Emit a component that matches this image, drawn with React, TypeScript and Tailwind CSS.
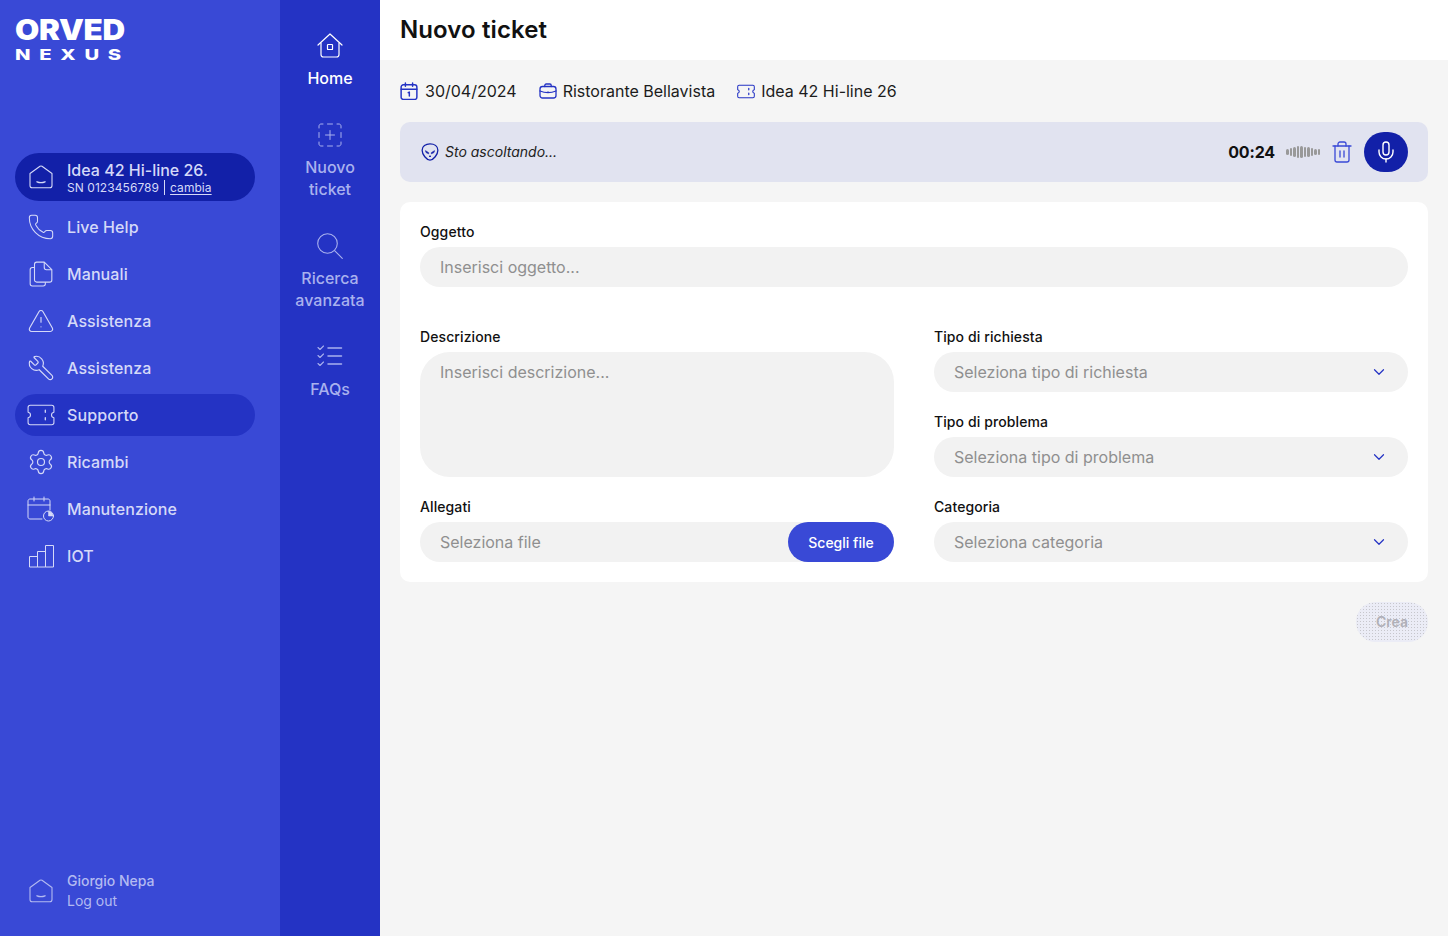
import {
  ChevronDown,
  Mic,
  Phone,
  Settings,
  Trash2,
  TriangleAlert,
  Wrench,
} from "lucide-react";

type IconProps = { className?: string };

function HouseSmile({ className }: IconProps) {
  return (
    <svg viewBox="0 0 24 24" fill="none" stroke="currentColor" strokeWidth="1.100" className={className}>
      <path d="M1 8.500 11 1.300c.6-.4 1.400-.4 2 0L23 8.500v12c0 1.400-1 2.300-2.300 2.300H3.300C2 22.800 1 21.900 1 20.500z" strokeLinejoin="round" />
      <path d="M8 16.800c2.500 1 5.500 1 8 0" strokeLinecap="round" strokeWidth="1.400" />
    </svg>
  );
}

function Docs({ className }: IconProps) {
  return (
    <svg viewBox="0 0 24 24" fill="none" stroke="currentColor" strokeWidth="1" strokeLinejoin="round" className={className}>
      <path d="M8 1h7l7 7v9.500c0 1.100-.9 2-2 2H8c-1.100 0-2-.9-2-2V3c0-1.100.9-2 2-2z" />
      <path d="M15 1v5c0 1.100.9 2 2 2h5" />
      <path d="M6 6H4C2.900 6 2 6.900 2 8v13c0 1.100.9 2 2 2h10c1.100 0 2-.9 2-2v-1.500" />
    </svg>
  );
}

function TicketIcon({ className, weight = 1 }: IconProps & { weight?: number }) {
  return (
    <svg viewBox="0 0 26 20" fill="none" stroke="currentColor" strokeWidth={weight} strokeLinejoin="round" className={className}>
      <path d="M3 1h20c1.100 0 2 .9 2 2v4.500c-3 .5-3 4.500 0 5V17c0 1.100-.9 2-2 2H3c-1.100 0-2-.9-2-2v-4.500c3-.5 3-4.500 0-5V3c0-1.100.9-2 2-2z" />
      <path d="M17 5.500v2M17 12.500v2" strokeLinecap="round" strokeWidth={weight * 1.2} />
    </svg>
  );
}

function CalendarClock({ className }: IconProps) {
  return (
    <svg viewBox="0 0 28 26" fill="none" stroke="currentColor" strokeWidth="1" strokeLinecap="round" strokeLinejoin="round" className={className}>
      <path d="M15 23H3c-1.100 0-2-.9-2-2V5c0-1.100.9-2 2-2h18c1.100 0 2 .9 2 2v9" />
      <path d="M1 9h22M7 1v4M17 1v4" />
      <circle cx="21.500" cy="20" r="5" />
      <path d="M21.500 15.500v4.500h4.500a4.500 4.500 0 0 0-4.500-4.500z" fill="currentColor" strokeWidth=".5" />
    </svg>
  );
}

function Bars({ className }: IconProps) {
  return (
    <svg viewBox="0 0 26 24" fill="none" stroke="currentColor" strokeWidth="1" strokeLinejoin="round" className={className}>
      <path d="M1 12.500h8V23H1zM9 7.500h8V23H9zM17 1.500h8V23h-8z" />
    </svg>
  );
}

function HomeIcon({ className }: IconProps) {
  return (
    <svg viewBox="0 0 26 26" fill="none" stroke="currentColor" strokeWidth="1.200" strokeLinejoin="round" strokeLinecap="round" className={className}>
      <path d="M1 12 13 1l12 11" />
      <path d="M4 10v11.500c0 1.400 1 2.500 2.500 2.500h13c1.500 0 2.500-1.100 2.500-2.500V10" />
      <rect x="10.500" y="11.500" width="5" height="5" rx=".6" />
    </svg>
  );
}

function AddDashed({ className }: IconProps) {
  return (
    <svg viewBox="0 0 24 24" fill="none" stroke="currentColor" strokeWidth="1" strokeLinecap="round" className={className}>
      <path d="M1 5V3c0-1.100.9-2 2-2h2M9.500 1h5M19 1h2c1.100 0 2 .9 2 2v2M23 9.500v5M23 19v2c0 1.100-.9 2-2 2h-2M14.500 23h-5M5 23H3c-1.100 0-2-.9-2-2v-2M1 14.500v-5" />
      <path d="M12 7.500v9M7.500 12h9" />
    </svg>
  );
}

function Magnifier({ className }: IconProps) {
  return (
    <svg viewBox="0 0 26 26" fill="none" stroke="currentColor" strokeWidth="1.100" strokeLinecap="round" className={className}>
      <circle cx="10.500" cy="10.500" r="9.800" />
      <path d="M17.800 17.800 25.300 25.300" />
    </svg>
  );
}

function Checklist({ className }: IconProps) {
  return (
    <svg viewBox="0 0 26 24" fill="none" stroke="currentColor" strokeLinecap="round" strokeLinejoin="round" className={className}>
      <path d="M1 2.500 3 4.500 6.500 1M1 10.500l2 2L6.500 9M1 18.500l2 2L6.500 17" strokeWidth="1.100" />
      <path d="M11 3h13.500M11 11h13.500M11 19h13.500" strokeWidth="1.500" />
    </svg>
  );
}

function Alien({ className }: IconProps) {
  return (
    <svg viewBox="0 0 16 16" fill="none" stroke="currentColor" strokeWidth="1.150" strokeLinejoin="round" className={className}>
      <path d="M8 .8c3.800 0 7 2 7 5.600 0 3.800-4 8.800-7 8.800s-7-5-7-8.800C1 2.800 4.200.8 8 .8z" />
      <path d="M4 6.800 6.800 8.600v1L4.500 8.500zM12 6.800 9.200 8.600v1l2.300-1.100z" fill="currentColor" strokeWidth=".6" />
      <path d="M7.100 11.800h1.800" />
    </svg>
  );
}

function CalendarDay({ className }: IconProps) {
  return (
    <svg viewBox="0 0 16 16" fill="none" stroke="currentColor" strokeWidth="1.300" strokeLinecap="round" strokeLinejoin="round" className={className}>
      <rect x="1" y="2.500" width="14" height="13" rx="2" />
      <path d="M1 6.500h14M4.800 .8v3M11.200 .8v3" />
      <path d="M7.300 9.500 8.300 9v3.500" />
    </svg>
  );
}

function Briefcase({ className }: IconProps) {
  return (
    <svg viewBox="0 0 18 16" fill="none" stroke="currentColor" strokeWidth="1.300" strokeLinecap="round" strokeLinejoin="round" className={className}>
      <rect x="1" y="3.500" width="16" height="11.500" rx="2.500" />
      <path d="M5.800 3.500V2.300C5.800 1.500 6.400 1 7.100 1h3.800c.7 0 1.300.5 1.300 1.300v1.200" />
      <path d="M1 8c5 2 11 2 16 0M9 8.800v.4" />
    </svg>
  );
}

const menu = [
  { label: "Live Help", icon: <Phone strokeWidth={0.9} className="h-[28px] w-[28px]" /> },
  { label: "Manuali", icon: <Docs className="h-[26px] w-[26px]" /> },
  { label: "Assistenza", icon: <TriangleAlert strokeWidth={1} className="h-[28px] w-[28px]" /> },
  { label: "Assistenza", icon: <Wrench strokeWidth={1} className="h-[28px] w-[28px] -scale-x-100" /> },
  { label: "Supporto", icon: <TicketIcon className="h-[22px] w-[28px]" />, active: true },
  { label: "Ricambi", icon: <Settings strokeWidth={1} className="h-[28px] w-[28px]" /> },
  { label: "Manutenzione", icon: <CalendarClock className="h-[26px] w-[28px]" /> },
  { label: "IOT", icon: <Bars className="h-[24px] w-[27px]" /> },
];

const waveBars = ["h-1.5", "h-2", "h-2.5", "h-3", "h-3", "h-2.5", "h-2.5", "h-2", "h-1.5", "h-1.5"];

function Sidebar() {
  return (
    <aside className="flex w-[280px] shrink-0 flex-col bg-[#3949d6] pr-[25px] pl-[15px] text-[#d5d9f8]">
      <div className="flex h-[153px] flex-col items-start pt-[14px] text-white">
        <span className="origin-left scale-x-[1.12] text-[28px] leading-[32px] font-black tracking-[-0.01em]">ORVED</span>
        <span className="mt-[1px] origin-left scale-x-[1.35] text-[15px] leading-[16px] font-extrabold tracking-[0.43em]">NEXUS</span>
      </div>
      <div className="flex flex-col gap-[5px]">
        <div className="flex h-[48px] items-center rounded-full bg-[#1220a8]">
          <div className="flex w-[52px] justify-center">
            <HouseSmile className="h-[24px] w-[24px]" />
          </div>
          <div className="flex flex-col">
            <span className="text-[16px] leading-[20px] font-medium">Idea 42 Hi-line 26.</span>
            <span className="text-[12px] leading-[15px] tracking-[0.005em]">
              SN 0123456789<span className="mx-[5px] border-l border-current" />
              <span className="underline underline-offset-2">cambia</span>
            </span>
          </div>
        </div>
        {menu.map((item, i) => (
          <div
            key={i}
            className={`flex h-[42px] items-center rounded-full ${item.active ? "bg-[#2433c4]" : ""}`}
          >
            <div className="flex w-[52px] justify-center">{item.icon}</div>
            <span className="text-[16px] font-medium tracking-[0.006em]">{item.label}</span>
          </div>
        ))}
      </div>
      <div className="mt-auto mb-[25px] flex items-center text-[#b3baf1]">
        <div className="flex w-[52px] justify-center">
          <HouseSmile className="h-[24px] w-[24px]" />
        </div>
        <div className="flex flex-col text-[14px] leading-[20px]">
          <span className="font-medium">Giorgio Nepa</span>
          <span>Log out</span>
        </div>
      </div>
    </aside>
  );
}

function NavItem({ icon, label, active }: { icon: React.ReactNode; label: React.ReactNode; active?: boolean }) {
  return (
    <div className={`flex flex-col items-center gap-[5px] ${active ? "text-white" : "text-[#a9b1ee]"}`}>
      <div className="flex h-[32px] items-center justify-center">{icon}</div>
      <span className="text-center text-[16px] leading-[22px] font-medium">{label}</span>
    </div>
  );
}

function QuickNav() {
  return (
    <nav className="flex w-[100px] shrink-0 flex-col gap-[30px] bg-[#2433c4] pt-[30px]">
      <NavItem active icon={<HomeIcon className="h-[26px] w-[26px]" />} label="Home" />
      <NavItem icon={<AddDashed className="h-[24px] w-[24px]" />} label={<>Nuovo<br />ticket</>} />
      <NavItem icon={<Magnifier className="h-[26px] w-[26px]" />} label={<>Ricerca<br />avanzata</>} />
      <NavItem icon={<Checklist className="h-[24px] w-[26px]" />} label="FAQs" />
    </nav>
  );
}

function Label({ children }: { children: React.ReactNode }) {
  return <label className="mb-[5px] block text-[14px] leading-[20px] font-medium tracking-[0.007em] text-[#111]">{children}</label>;
}

function Select({ placeholder }: { placeholder: string }) {
  return (
    <div className="flex h-[40px] items-center justify-between rounded-full bg-[#f2f2f2] px-[20px] text-[16px] text-[#8f8f8f]">
      <span>{placeholder}</span>
      <ChevronDown strokeWidth={1.6} className="h-[18px] w-[18px] text-[#2433c4]" />
    </div>
  );
}

function Field({ label, placeholder }: { label: string; placeholder: string }) {
  return (
    <div>
      <Label>{label}</Label>
      <Select placeholder={placeholder} />
    </div>
  );
}

export default function App() {
  return (
    <div className="flex h-[936px] w-[1448px] overflow-hidden bg-[#f5f5f5] font-['Inter',sans-serif]">
      <Sidebar />
      <QuickNav />
      <main className="flex min-w-0 flex-1 flex-col">
        <header className="flex h-[60px] items-center bg-white px-[20px]">
          <h1 className="text-[24px] font-semibold tracking-[0.004em] text-[#111]">Nuovo ticket</h1>
        </header>
        <div className="flex flex-1 flex-col px-[20px] pt-[20px]">
          <div className="flex h-[22px] items-center gap-[22px] text-[16px] text-[#1c1c1c]">
            <div className="flex items-center gap-[7px]">
              <CalendarDay className="h-[18px] w-[18px] text-[#2433c4]" />
              <span>30/04/2024</span>
            </div>
            <div className="flex items-center gap-[6px]">
              <Briefcase className="h-[16px] w-[18px] text-[#2433c4]" />
              <span>Ristorante Bellavista</span>
            </div>
            <div className="flex items-center gap-[6px]">
              <TicketIcon weight={1.5} className="h-[15px] w-[18px] text-[#2433c4]" />
              <span>Idea 42 Hi-line 26</span>
            </div>
          </div>

          <div className="mt-[20px] flex h-[60px] items-center rounded-[10px] bg-[#e1e3f0] px-[20px]">
            <Alien className="ml-px h-[18px] w-[18px] text-[#1220a8]" />
            <span className="ml-[6px] pb-px text-[14px] text-[#222] italic">Sto ascoltando...</span>
            <span className="ml-auto text-[16px] font-bold tracking-[-0.01em] text-[#111]">00:24</span>
            <div className="ml-[11px] flex items-center gap-px">
              {waveBars.map((h, i) => (
                <span key={i} className={`w-[2.500px] rounded-full bg-[#999] ${h}`} />
              ))}
            </div>
            <Trash2 strokeWidth={1.300} className="ml-[10px] h-[24px] w-[24px] text-[#3949d6]" />
            <div className="ml-[10px] flex h-[40px] w-[44px] items-center justify-center rounded-full bg-[#1220a8]">
              <Mic strokeWidth={1.400} className="h-[24px] w-[24px] text-white" />
            </div>
          </div>

          <section className="mt-[20px] rounded-[10px] bg-white p-[20px]">
            <Label>Oggetto</Label>
            <input
              placeholder="Inserisci oggetto..."
              className="h-[40px] w-full rounded-full bg-[#f2f2f2] px-[20px] text-[16px] outline-none placeholder:text-[#8f8f8f]"
            />
            <div className="mt-[40px] grid grid-cols-2 gap-x-[40px]">
              <div className="flex flex-col gap-[20px]">
                <div>
                  <Label>Descrizione</Label>
                  <textarea
                    placeholder="Inserisci descrizione..."
                    className="block h-[125px] w-full resize-none rounded-[30px] bg-[#f2f2f2] px-[20px] py-[8px] text-[16px] outline-none placeholder:text-[#8f8f8f]"
                  />
                </div>
                <div>
                  <Label>Allegati</Label>
                  <div className="flex h-[40px] items-center justify-between rounded-full bg-[#f2f2f2] pl-[20px] text-[16px] text-[#8f8f8f]">
                    <span>Seleziona file</span>
                    <button className="h-[40px] w-[106px] rounded-full bg-[#3949d6] text-[14px] font-medium text-white">
                      Scegli file
                    </button>
                  </div>
                </div>
              </div>
              <div className="flex flex-col gap-[20px]">
                <Field label="Tipo di richiesta" placeholder="Seleziona tipo di richiesta" />
                <Field label="Tipo di problema" placeholder="Seleziona tipo di problema" />
                <Field label="Categoria" placeholder="Seleziona categoria" />
              </div>
            </div>
          </section>

          <div className="mt-[20px] flex justify-end">
            <button className="h-[40px] w-[72px] rounded-full bg-[#ebecf6] bg-[radial-gradient(#c6c6cc_0.8px,transparent_0.9px)] bg-[length:3px_3px] pb-[1px] text-[14px] font-semibold text-[#b0b0b8]">
              Crea
            </button>
          </div>
        </div>
      </main>
    </div>
  );
}
